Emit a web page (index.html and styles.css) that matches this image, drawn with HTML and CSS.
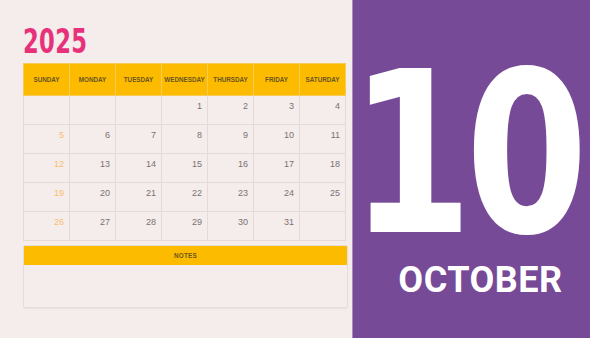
FILE: index.html
```html
<!DOCTYPE html>
<html>
<head>
<meta charset="utf-8">
<link rel="stylesheet" href="styles.css">
</head>
<body>
<div class="page">
  <section class="left">
    <h1 class="year">2025</h1>
    <table class="cal">
      <thead>
        <tr><th>SUNDAY</th><th>MONDAY</th><th>TUESDAY</th><th>WEDNESDAY</th><th>THURSDAY</th><th>FRIDAY</th><th>SATURDAY</th></tr>
      </thead>
      <tbody>
        <tr><td class="sun"></td><td></td><td></td><td>1</td><td>2</td><td>3</td><td>4</td></tr>
        <tr><td class="sun">5</td><td>6</td><td>7</td><td>8</td><td>9</td><td>10</td><td>11</td></tr>
        <tr><td class="sun">12</td><td>13</td><td>14</td><td>15</td><td>16</td><td>17</td><td>18</td></tr>
        <tr><td class="sun">19</td><td>20</td><td>21</td><td>22</td><td>23</td><td>24</td><td>25</td></tr>
        <tr><td class="sun">26</td><td>27</td><td>28</td><td>29</td><td>30</td><td>31</td><td></td></tr>
      </tbody>
    </table>
    <div class="notes">
      <div class="notes-head">NOTES</div>
      <div class="notes-body"></div>
    </div>
  </section>
  <section class="right">
    <div class="day">10</div>
    <div class="month">OCTOBER</div>
  </section>
</div>
</body>
</html>
```

FILE: styles.css
```css
html, body {
  margin: 0;
  padding: 0;
  background: #f5ecec;
}
.page {
  display: flex;
  width: 590px;
  height: 338px;
}
.left {
  width: 352px;
  flex: none;
  box-sizing: border-box;
  padding: 0 6px 0 23px;
  display: flex;
  flex-direction: column;
}
.year {
  margin: 0;
  height: 63px;
  box-sizing: border-box;
  padding-top: 21px;
  font-family: "DejaVu Sans Condensed", "DejaVu Sans", sans-serif;
  font-weight: bold;
  font-size: 34px;
  line-height: 40px;
  color: #e8317b;
  transform: scaleX(0.74);
  transform-origin: left top;
  letter-spacing: 0.5px;
}
.cal {
  border-collapse: collapse;
  table-layout: fixed;
  width: 323px;
  font-family: "Liberation Sans", Arial, sans-serif;
}
.cal th {
  background: #fdbb00;
  height: 31px;
  padding: 0;
  font-size: 6.3px;
  font-weight: bold;
  color: #6a5520;
  border: 1px solid #f6cb58;
  text-align: center;
  vertical-align: middle;
}
.cal td {
  height: 29px;
  box-sizing: border-box;
  padding: 5px 5px 0 0;
  border: 1px solid #e6dad8;
  text-align: right;
  vertical-align: top;
  font-size: 9px;
  color: #797272;
}
.cal td.sun {
  color: #f8bf6e;
}
.notes {
  margin-top: 4px;
  width: 323px;
  border: 1px solid #e8dcda;
  border-radius: 2px;
  box-shadow: 0 1px 1px rgba(0,0,0,0.05);
  font-family: "Liberation Sans", Arial, sans-serif;
}
.notes-head {
  background: #fdbb00;
  height: 19px;
  line-height: 19px;
  text-align: center;
  font-size: 6.3px;
  font-weight: bold;
  color: #6a5520;
  letter-spacing: 0.3px;
}
.notes-body {
  height: 42px;
}
.right {
  width: 238px;
  min-width: 0;
  flex: none;
  background: #764a96;
  display: flex;
  flex-direction: column;
  align-items: flex-start;
  border-left: 1px solid #a98cbd;
  box-sizing: border-box;
}
.day {
  margin-top: 44px;
  margin-left: -3px;
  width: 266px;
  font-family: "DejaVu Sans Condensed", "DejaVu Sans", sans-serif;
  font-weight: bold;
  font-size: 225px;
  line-height: 220px;
  color: #ffffff;
  letter-spacing: -8px;
  white-space: nowrap;
  transform: scaleX(0.87);
  transform-origin: left top;
  height: 216px;
}
.month {
  align-self: center;
  font-family: Roboto, "Liberation Sans", sans-serif;
  font-weight: 700;
  font-size: 36px;
  line-height: 40px;
  color: #ffffff;
  letter-spacing: 0.5px;
  padding-left: 18px;
  white-space: nowrap;
}
```
